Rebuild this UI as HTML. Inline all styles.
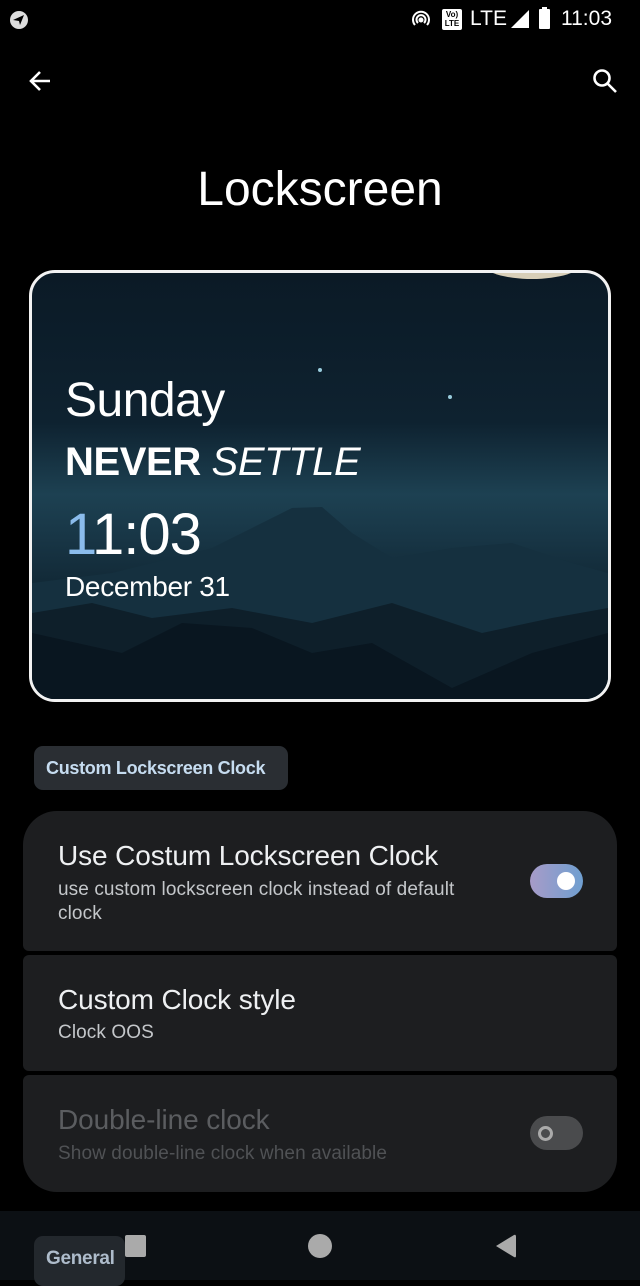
<!DOCTYPE html>
<html><head><meta charset="utf-8"><style>
*{margin:0;padding:0;box-sizing:border-box}
body{width:640px;height:1280px;background:#000;font-family:"Liberation Sans",sans-serif;color:#fff;position:relative;overflow:hidden}
.abs{position:absolute}
.card{position:absolute;left:23px;width:594px;background:#1d1e20}
.t{position:absolute;left:35px;font-size:28px;color:#eef0f2;letter-spacing:-0.1px}
.s{position:absolute;left:35px;font-size:19px;color:#c4c7ca;line-height:24px;letter-spacing:0.1px}
</style></head><body>
<!-- status bar -->
<svg class="abs" style="left:8px;top:9px" width="22" height="22" viewBox="0 0 22 22"><circle cx="11" cy="11" r="9" fill="#ddd"/><path d="M5 11 L16 6 L12 16 L11 12 Z" fill="#000"/></svg>
<svg class="abs" style="left:410px;top:9px" width="22" height="22" viewBox="0 0 22 22" fill="none" stroke="#fff" stroke-width="2"><path d="M5 16 A8 8 0 1 1 17 16"/><path d="M8 14 A4.5 4.5 0 1 1 14 14"/><circle cx="11" cy="11" r="1.5" fill="#fff"/></svg>
<div class="abs" style="left:442px;top:9px;width:20px;height:21px;background:#fff;border-radius:2px;color:#000;font-size:8px;font-weight:bold;line-height:9px;text-align:center;padding-top:1px">Vo)<br>LTE</div>
<div class="abs" style="left:470px;top:7px;font-size:21px;color:#fff">LTE</div>
<svg class="abs" style="left:511px;top:10px" width="18" height="18"><path d="M0 18 L18 0 L18 18 Z" fill="#fff"/></svg>
<div class="abs" style="left:539px;top:9px;width:11px;height:20px;background:#fff;border-radius:1px"></div>
<div class="abs" style="left:542px;top:7px;width:5px;height:3px;background:#fff"></div>
<div class="abs" style="left:561px;top:7px;font-size:21px;color:#fff">11:03</div>
<!-- toolbar -->
<svg class="abs" style="left:27px;top:68px" width="26" height="26" viewBox="0 0 26 26" fill="none" stroke="#fff" stroke-width="2.6"><path d="M23 13 H4 M13 4 L4 13 L13 22"/></svg>
<svg class="abs" style="left:591px;top:67px" width="28" height="28" viewBox="0 0 28 28" fill="none" stroke="#fff" stroke-width="2.6"><circle cx="11" cy="11" r="7.5"/><path d="M16.5 16.5 L25 25"/></svg>
<div class="abs" style="left:0;width:640px;top:162px;text-align:center;font-size:48px;color:#fff">Lockscreen</div>
<!-- preview -->
<div class="abs" style="left:29px;top:270px;width:582px;height:432px;border:3px solid #f2f2f2;border-radius:26px;overflow:hidden;background:linear-gradient(180deg,#0b1a26 0%,#0e2230 35%,#1d4152 52%,#183646 62%,#0b1b26 85%,#08121a 100%)">
<svg class="abs" style="left:0;top:0" width="576" height="426" viewBox="0 0 576 426">
<ellipse cx="500" cy="-10" rx="50" ry="16" fill="#d8cfb8"/>
<circle cx="288" cy="97" r="2" fill="#9cd"/><circle cx="418" cy="124" r="2" fill="#9cd"/>
<path d="M0 310 L80 300 L180 275 L230 250 L260 235 L290 234 L320 260 L360 285 L420 275 L480 270 L540 290 L576 300 L576 426 L0 426Z" fill="#15303f"/>
<path d="M0 340 L60 330 L120 345 L200 335 L280 350 L360 330 L450 360 L520 345 L576 335 L576 426 L0 426Z" fill="#0e1f2a"/>
<path d="M0 360 L90 380 L150 350 L220 355 L280 380 L340 370 L420 415 L500 380 L576 360 L576 426 L0 426Z" fill="#091620"/>
</svg>
<div class="abs" style="left:33px;top:100px;font-size:48px;color:#fff;letter-spacing:-0.5px">Sunday</div>
<div class="abs" style="left:33px;top:167px;font-size:40px;color:#fff;letter-spacing:-0.4px"><b>NEVER</b> <i>SETTLE</i></div>
<div class="abs" style="left:33px;top:228px;font-size:58px;color:#fff;letter-spacing:-1px"><span style="color:#8bbcec">1</span>1:03</div>
<div class="abs" style="left:33px;top:298px;font-size:28px;color:#fff;letter-spacing:-0.3px">December 31</div>
</div>
<!-- section chip -->
<div class="abs" style="left:34px;top:746px;width:254px;height:44px;background:#2a2e33;border-radius:9px;color:#c6dcf0;font-size:18px;font-weight:bold;line-height:44px;padding-left:12px;letter-spacing:-0.3px">Custom Lockscreen Clock</div>
<!-- cards -->
<div class="card" style="top:811px;height:140px;border-radius:34px 34px 6px 6px">
<div class="t" style="top:29px">Use Costum Lockscreen Clock</div>
<div class="s" style="top:67px">use custom lockscreen clock instead of default<br>clock</div>
<div class="abs" style="left:507px;top:53px;width:53px;height:34px;border-radius:17px;background:linear-gradient(90deg,#a79bc8,#6f9fd0)"></div>
<div class="abs" style="left:534px;top:61px;width:18px;height:18px;border-radius:9px;background:#fff"></div>
</div>
<div class="card" style="top:955px;height:116px;border-radius:6px">
<div class="t" style="top:29px">Custom Clock style</div>
<div class="s" style="top:66px">Clock OOS</div>
</div>
<div class="card" style="top:1075px;height:117px;border-radius:6px 6px 34px 34px">
<div class="t" style="top:29px;color:#5b5d60">Double-line clock</div>
<div class="s" style="top:67px;color:#505255">Show double-line clock when available</div>
<div class="abs" style="left:507px;top:41px;width:53px;height:34px;border-radius:17px;background:#4a4b4d"></div>
<div class="abs" style="left:515px;top:51px;width:15px;height:15px;border-radius:8px;border:3.5px solid #aaa"></div>
</div>
<!-- nav bar -->
<div class="abs" style="left:0;top:1211px;width:640px;height:69px;background:#0c1014"></div>
<div class="abs" style="left:34px;top:1236px;width:91px;height:50px;background:#23282d;border-radius:9px;color:#aebccb;font-size:19px;font-weight:bold;padding:12px 0 0 12px;letter-spacing:-0.3px">General</div>
<div class="abs" style="left:125px;top:1235px;width:21px;height:22px;background:#aaa;border-radius:2px"></div>
<div class="abs" style="left:308px;top:1234px;width:24px;height:24px;background:#aaa;border-radius:50%"></div>
<svg class="abs" style="left:494px;top:1233px" width="24" height="26"><path d="M2 13 L20 2 Q22 1 22 4 L22 23 Q22 25 20 24 Z" fill="#aaa"/></svg>
</body></html>
